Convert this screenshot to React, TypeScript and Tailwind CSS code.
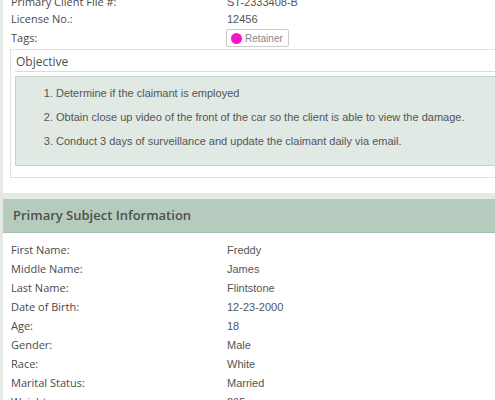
import React from "react";

const open = { fontFamily: '"Open Sans", "Liberation Sans", sans-serif' };
const arial = { fontFamily: '"Liberation Sans", Arial, sans-serif' };

const subject: [string, string][] = [
  ["First Name:", "Freddy"],
  ["Middle Name:", "James"],
  ["Last Name:", "Flintstone"],
  ["Date of Birth:", "12-23-2000"],
  ["Age:", "18"],
  ["Gender:", "Male"],
  ["Race:", "White"],
  ["Marital Status:", "Married"],
  ["Weight:", "265"],
];

export default function App() {
  return (
    <div className="w-[495px] h-[400px] overflow-hidden bg-[#e6eae7] pl-[3px]">
      <div className="w-[520px] bg-white mt-[-7px] pb-[15px]">
        <div className="flex flex-col">
          <div className="flex h-[18px] items-center">
            <div className="w-[224px] pl-[8px] text-[11px] font-medium text-[#4a4a4a]" style={open}>Primary Client File #:</div>
            <div className="text-[11px] text-[#555]" style={arial}>ST-2333408-B</div>
          </div>
          <div className="flex h-[17px] items-center">
            <div className="w-[224px] pl-[8px] text-[11px] font-medium text-[#4a4a4a]" style={open}>License No.:</div>
            <div className="text-[11px] text-[#555]" style={arial}>12456</div>
          </div>
          <div className="flex h-[18px] mt-[1px] items-center">
            <div className="w-[223px] pl-[8px] text-[11px] font-medium text-[#4a4a4a]" style={open}>Tags:</div>
            <div className="flex items-center gap-[3px] h-[18px] border border-[#ccc] rounded-[2px] pl-[4px] pr-[5px] bg-white">
              <span className="w-[11px] h-[11px] rounded-full bg-[#ff10c8]" />
              <span className="text-[10px] text-[#888]" style={arial}>Retainer</span>
            </div>
          </div>
        </div>
        <div className="ml-[7px] mt-[2px] border border-[#dfe3e0] pl-[4px] pt-[3px] pb-[11px]">
          <div className="text-[12px] font-medium text-[#505050] pl-[1px] border-b border-[#d9dcda] leading-[18px]" style={open}>Objective</div>
          <div className="mt-[4px] bg-[#e0e9e4] border border-[#c8d2cc] pt-[9px] pb-[17px] pl-[27px]">
            <ol className="list-decimal pl-[13px] text-[11px] text-[#555] flex flex-col gap-[10px]" style={arial}>
              <li className="leading-[14px]">Determine if the claimant is employed</li>
              <li className="leading-[14px]">Obtain close up video of the front of the car so the client is able to view the damage.</li>
              <li className="leading-[14px]">Conduct 3 days of surveillance and update the claimant daily via email.</li>
            </ol>
          </div>
        </div>
      </div>
      <div className="w-[520px] mt-[6px] bg-white">
        <div className="h-[34px] bg-[#b5cbbd] border-b border-[#a8bfb0] flex items-center pl-[10px] text-[13px] font-semibold text-[#505050]" style={open}>
          Primary Subject Information
        </div>
        <div className="pt-[8px] flex flex-col">
          {subject.map(([k, v]) => (
            <div key={k} className="flex h-[19px] items-center">
              <div className="w-[224px] pl-[8px] text-[11px] font-medium text-[#4a4a4a]" style={open}>{k}</div>
              <div className="text-[11px] text-[#555]" style={arial}>{v}</div>
            </div>
          ))}
        </div>
      </div>
    </div>
  );
}
